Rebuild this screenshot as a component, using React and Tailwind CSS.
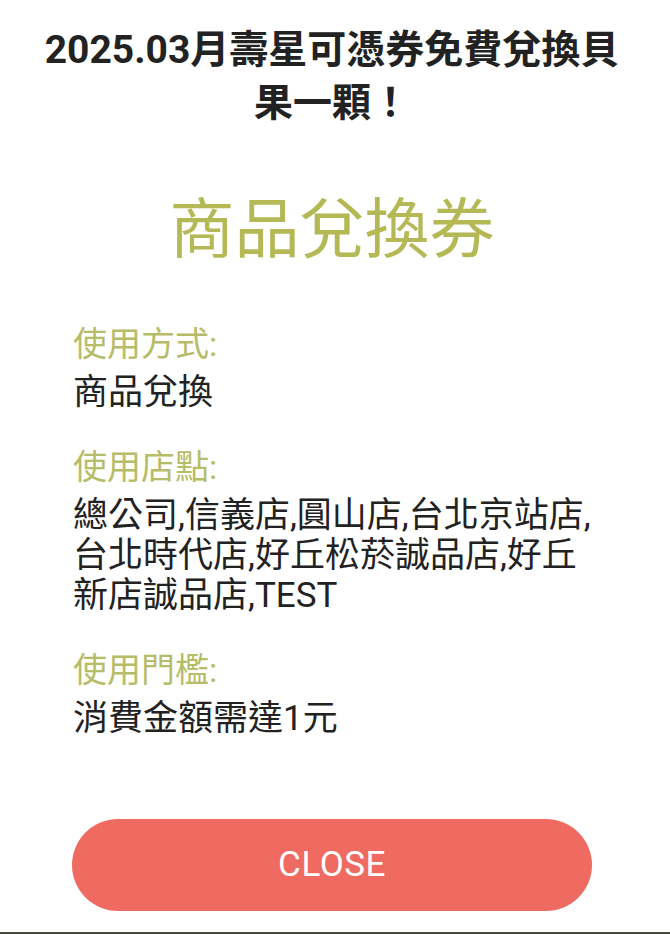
export default function App() {
  const sections = [
    { label: "使用方式:", value: "商品兌換" },
    {
      label: "使用店點:",
      value:
        "總公司,信義店,圓山店,台北京站店,台北時代店,好丘松菸誠品店,好丘新店誠品店,TEST",
    },
    { label: "使用門檻:", value: "消費金額需達1元" },
  ];

  return (
    <div
      className="w-full h-[934px] bg-white flex flex-col pr-[6px]"
      style={{ fontFamily: "Roboto, 'Noto Sans CJK TC', sans-serif" }}
    >
      <h1 className="px-[36px] pt-[24px] text-center text-[39px] leading-[53px] font-bold text-[#222222]">
        2025.03月壽星可憑券免費兌換貝果一顆！
      </h1>

      <h2 className="mt-[60px] text-center text-[65px] leading-[80px] text-[#b4b855]">
        商品兌換券
      </h2>

      <div className="mt-[54px] pl-[73px] pr-[62px] flex flex-col gap-[34px]">
        {sections.map((s) => (
          <div key={s.label} className="flex flex-col gap-[9px]">
            <p className="text-[34px] leading-[40px] text-[#b6bc68]">{s.label}</p>
            <p className="text-[35px] leading-[40px] text-[#222222]">{s.value}</p>
          </div>
        ))}
      </div>

      <div className="flex-1 flex items-end justify-center pb-[21px]">
        <button className="w-[520px] h-[92px] rounded-full bg-[#ef6a60] text-white text-[35px] tracking-[0.5px]">
          CLOSE
        </button>
      </div>
      <div className="h-[2px] bg-[#474a3a] -mr-[6px]"></div>
    </div>
  );
}
